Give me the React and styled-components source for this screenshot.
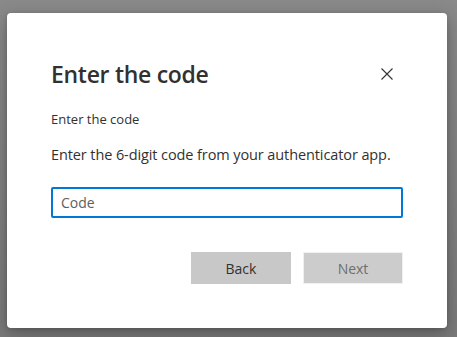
import React from "react";
import styled, { createGlobalStyle } from "styled-components";

const Global = createGlobalStyle`
  html, body {
    margin: 0;
    padding: 0;
    background: #898989;
  }
  body {
    font-family: "Open Sans", "Noto Sans", sans-serif;
  }
`;

export default function App() {
  return (
    <>
      <Global />
      <Backdrop>
        <Dialog>
          <Header>
            <Title>Enter the code</Title>
            <Close aria-label="Close">
              <svg width="12" height="12" viewBox="0 0 12 12">
                <path d="M0.5 0.5 L11.5 11.5 M11.5 0.5 L0.5 11.5" stroke="#323130" strokeWidth="1.1" />
              </svg>
            </Close>
          </Header>
          <Label>Enter the code</Label>
          <Description>Enter the 6-digit code from your authenticator app.</Description>
          <CodeInput type="text" placeholder="Code" autoFocus />
          <Footer>
            <Button>Back</Button>
            <Button disabled>Next</Button>
          </Footer>
        </Dialog>
      </Backdrop>
    </>
  );
}

const Backdrop = styled.div`
  width: 457px;
  height: 337px;
  padding: 13px 10px 9px 7px;
  box-sizing: border-box;
  background: linear-gradient(#898989, #7a7a7a);
`;

const Dialog = styled.div`
  width: 440px;
  height: 315px;
  box-sizing: border-box;
  background: #fff;
  border-radius: 4px;
  box-shadow: 0 6px 18px rgba(0, 0, 0, 0.28), 0 1px 4px rgba(0, 0, 0, 0.15);
  padding: 44px 44px 0 44px;
  display: flex;
  flex-direction: column;
`;

const Header = styled.div`
  display: flex;
  justify-content: space-between;
  align-items: center;
  height: 34px;
`;

const Title = styled.h1`
  margin: 0;
  font-size: 23px;
  font-weight: 600;
  color: #323130;
  letter-spacing: -0.3px;
`;

const Close = styled.button`
  border: 0;
  background: none;
  padding: 0;
  margin-right: 10px;
  width: 12px;
  height: 12px;
  display: flex;
  cursor: pointer;
`;

const Label = styled.div`
  margin-top: 19px;
  font-size: 13px;
  color: #323130;
  line-height: 18px;
`;

const Description = styled.p`
  margin: 17px 0 0;
  font-size: 14.5px;
  color: #323130;
  line-height: 20px;
  letter-spacing: -0.1px;
`;

const CodeInput = styled.input`
  margin-top: 22px;
  width: 352px;
  height: 31px;
  box-sizing: border-box;
  border: 2px solid #0078d4;
  border-radius: 2px;
  padding: 0 8px;
  font-family: "Open Sans", "Noto Sans", sans-serif;
  font-size: 14px;
  color: #323130;
  outline: none;
  &::placeholder {
    color: #605e5c;
  }
`;

const Footer = styled.div`
  margin-top: 34px;
  width: 352px;
  display: flex;
  justify-content: flex-end;
  gap: 12px;
`;

const Button = styled.button`
  width: 100px;
  height: 32px;
  border: 1px solid #c8c8c8;
  border-radius: 0;
  background: #c8c8c8;
  font-family: "Open Sans", "Noto Sans", sans-serif;
  font-size: 14px;
  color: #323130;
  cursor: pointer;
  &:disabled {
    background: #cccccc;
    border-color: #f0f0f0;
    color: #6e6e6e;
    cursor: default;
  }
`;
